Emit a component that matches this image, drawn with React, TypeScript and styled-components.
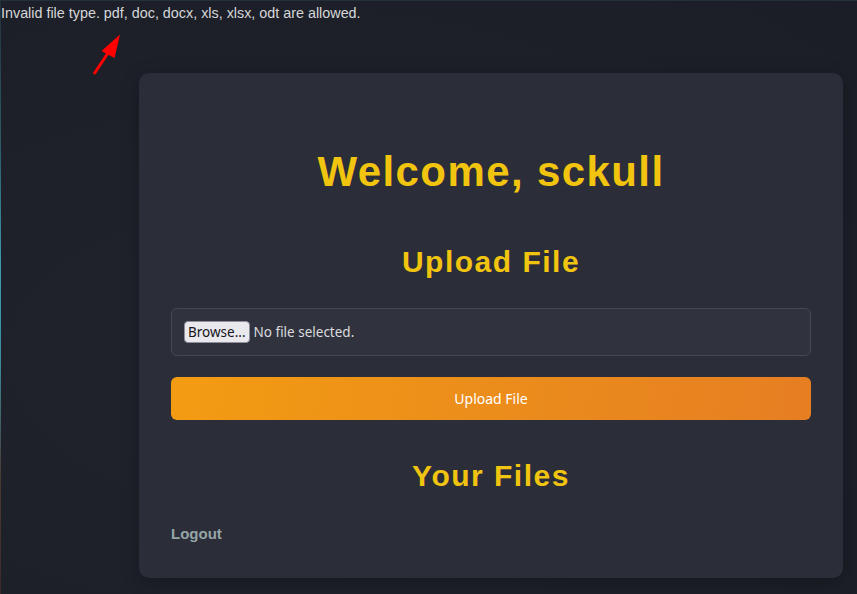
import styled, { createGlobalStyle } from "styled-components";

const GlobalStyle = createGlobalStyle`
  html, body {
    margin: 0;
    padding: 0;
    background: #1d2029;
  }
  #root {
    min-height: 594px;
  }
`;

const Page = styled.div`
  position: relative;
  min-height: 594px;
  box-sizing: border-box;
  border-left: 1px solid;
  border-top: 1px solid #2a2d36;
  border-image: linear-gradient(
      to bottom,
      #23303a 0%,
      #2c5d6a 25%,
      #3f9bb0 45%,
      #3a8fa0 60%,
      #4a3a34 80%,
      #3b2a28 100%
    )
    1;
  background: radial-gradient(
      ellipse at 30% 60%,
      #20232c 0%,
      #1d2029 60%,
      #1b1e26 100%
    );
  display: flex;
  flex-direction: column;
`;

const ErrorText = styled.p`
  margin: 0;
  padding-top: 2px;
  font-family: "Liberation Sans", Arial, sans-serif;
  font-size: 14.35px;
  line-height: 20px;
  color: #d6d6d8;
`;

const Arrow = styled.svg`
  position: absolute;
  left: 0;
  top: 0;
  pointer-events: none;
`;

const Card = styled.main`
  margin: 50px 14px 16px 138px;
  padding: 40px 32px 35px;
  background: #2b2d39;
  border-radius: 10px;
  box-shadow: 0 4px 18px rgba(0, 0, 0, 0.25);
  display: flex;
  flex-direction: column;
`;

const Title = styled.h1<{ size: number; top: number }>`
  margin: ${(p) => p.top}px 0 0;
  text-align: center;
  font-family: "Liberation Sans", Arial, sans-serif;
  font-weight: bold;
  font-size: ${(p) => p.size}px;
  line-height: ${(p) => Math.round(p.size * 1.17)}px;
  letter-spacing: ${(p) => (p.size > 36 ? 1.4 : 1.5)}px;
  color: #f1c40f;
`;

const FileBox = styled.label`
  margin-top: 29px;
  height: 48px;
  box-sizing: border-box;
  display: flex;
  align-items: center;
  gap: 4px;
  padding: 0 12px;
  background: #30333e;
  border: 1px solid #464955;
  border-radius: 6px;
  font-family: "Noto Sans", "Open Sans", sans-serif;
  font-size: 13.5px;
  color: #dcdcdf;
  cursor: pointer;

  input {
    display: none;
  }
`;

const BrowseButton = styled.span`
  display: inline-flex;
  align-items: center;
  height: 22px;
  box-sizing: border-box;
  padding: 0 3px;
  background: #e9e9ed;
  border: 1px solid #8f8f9d;
  border-radius: 4px;
  color: #15141a;
  font-size: 13.5px;
`;

const UploadButton = styled.button`
  margin-top: 21px;
  height: 43px;
  border: none;
  border-radius: 6px;
  background: linear-gradient(100deg, #f39c12 0%, #ea8a1d 60%, #e67e22 100%);
  color: #ffffff;
  font-family: "Noto Sans", "Open Sans", sans-serif;
  font-size: 14px;
  cursor: pointer;
`;

const Logout = styled.a`
  margin-top: 32px;
  align-self: flex-start;
  font-family: "Liberation Sans", Arial, sans-serif;
  font-weight: bold;
  font-size: 15px;
  line-height: 18px;
  color: #95a5a6;
  text-decoration: none;
`;

export default function App() {
  return (
    <>
      <GlobalStyle />
      <Page>
        <ErrorText>
          Invalid file type. pdf, doc, docx, xls, xlsx, odt are allowed.
        </ErrorText>
        <Arrow width="140" height="80" viewBox="0 0 140 80">
          <line
            x1="93"
            y1="73"
            x2="107"
            y2="52"
            stroke="#ff0000"
            strokeWidth="3"
          />
          <polygon points="119,33.5 100.5,50 113.5,57" fill="#ff0000" />
        </Arrow>
        <Card>
          <Title size={42} top={34}>
            Welcome, sckull
          </Title>
          <Title size={30} top={48}>
            Upload File
          </Title>
          <FileBox>
            <input type="file" />
            <BrowseButton>Browse...</BrowseButton>
            <span>No file selected.</span>
          </FileBox>
          <UploadButton>Upload File</UploadButton>
          <Title size={30} top={38}>
            Your Files
          </Title>
          <Logout href="#">Logout</Logout>
        </Card>
      </Page>
    </>
  );
}
